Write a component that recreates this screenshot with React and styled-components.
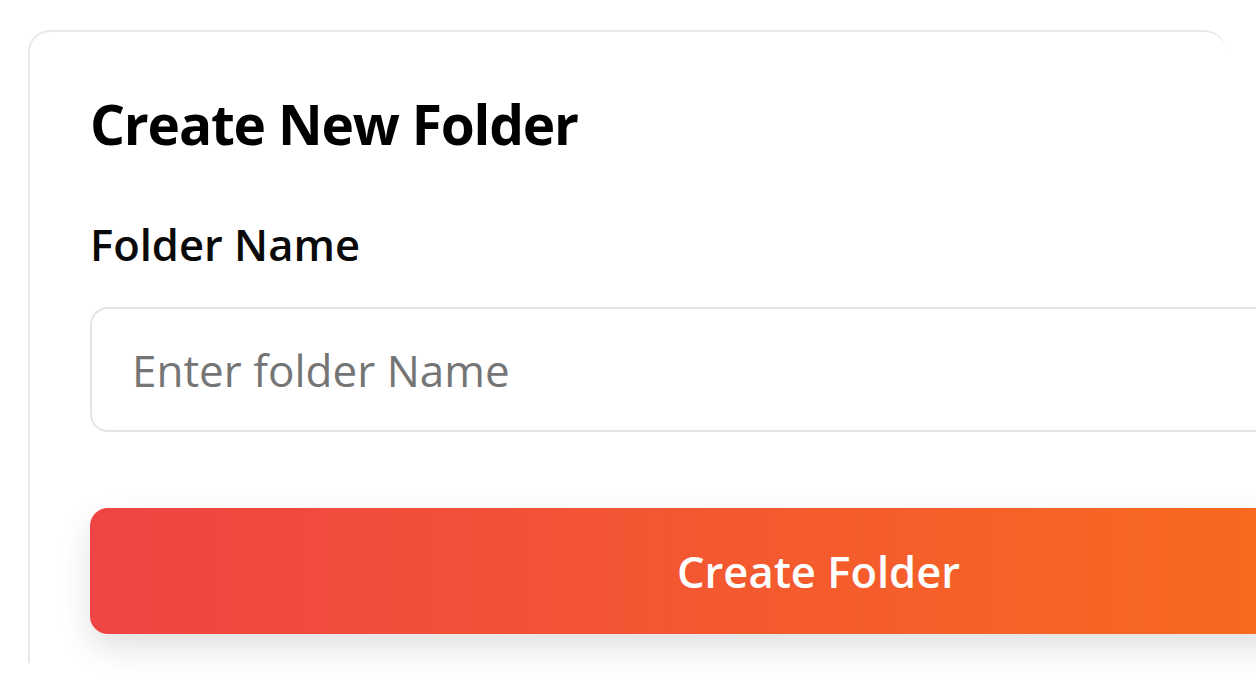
import React from "react";
import styled, { createGlobalStyle } from "styled-components";

const GlobalStyle = createGlobalStyle`
    html, body {
        margin: 0;
        padding: 0;
        background: #ffffff;
        overflow: hidden;
    }

    body {
        font-family: "Open Sans", "Noto Sans", sans-serif;
        -webkit-font-smoothing: antialiased;
    }
`;

const Page = styled.div`
    padding: 30px 0 0 28px;
    height: 687px;
    box-sizing: border-box;
`;

const Card = styled.div`
    width: 1198px;
    box-sizing: border-box;
    background: #ffffff;
    border: 2px solid #e8e8e8;
    border-right: none;
    border-bottom: none;
    border-radius: 22px 22px 0 0;
    padding: 53px 0 29px 60px;
`;

const Form = styled.form`
    width: 1457px;
    display: flex;
    flex-direction: column;
`;

const Title = styled.h2`
    margin: 0 0 53px;
    font-size: 55px;
    line-height: 77px;
    font-weight: 700;
    color: #000000;
    letter-spacing: -1.2px;
`;

const Label = styled.label`
    display: block;
    font-size: 43.5px;
    line-height: 60px;
    font-weight: 600;
    color: #0a0a0a;
    margin-bottom: 32px;
`;

const Input = styled.input`
    height: 125px;
    box-sizing: border-box;
    border: 2px solid #e5e5e5;
    border-radius: 18px;
    padding: 0 40px;
    font-family: inherit;
    font-size: 44px;
    color: #111111;
    background: #ffffff;
    outline: none;

    &::placeholder {
        color: #757575;
    }
`;

const SubmitButton = styled.button`
    margin-top: 76px;
    height: 126px;
    border: none;
    border-radius: 18px;
    background: linear-gradient(90deg, #ef4444 0%, #f97316 100%);
    color: #ffffff;
    font-family: inherit;
    font-size: 43.5px;
    font-weight: 600;
    box-shadow: 0 14px 32px rgba(0, 0, 0, 0.12);
    cursor: pointer;
`;

const App = () => {
    return (
        <>
            <GlobalStyle />
            <Page>
                <Card>
                    <Form onSubmit={(e) => e.preventDefault()}>
                        <Title>Create New Folder</Title>
                        <Label htmlFor="folder-name">Folder Name</Label>
                        <Input id="folder-name" placeholder="Enter folder Name" />
                        <SubmitButton type="submit">Create Folder</SubmitButton>
                    </Form>
                </Card>
            </Page>
        </>
    );
};

export default App;
